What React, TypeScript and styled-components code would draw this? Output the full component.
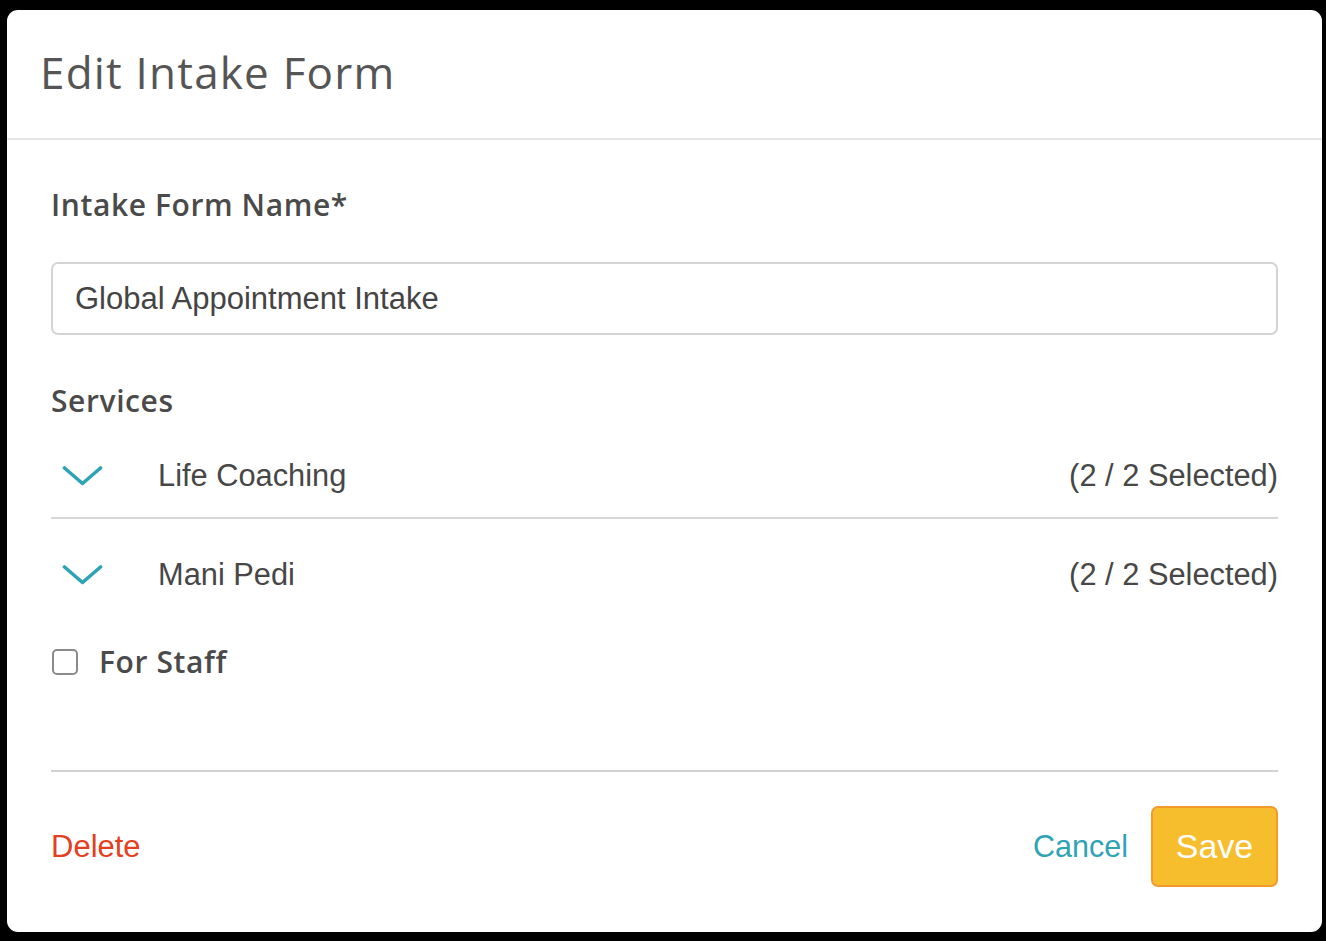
import styled, { createGlobalStyle } from 'styled-components';

const GlobalStyle = createGlobalStyle`
  html, body {
    margin: 0;
    padding: 0;
    background: #000;
  }
  * {
    box-sizing: border-box;
  }
`;

const services = [
  { name: 'Life Coaching', selected: 2, total: 2 },
  { name: 'Mani Pedi', selected: 2, total: 2 },
];

const Chevron = () => (
  <svg width="41" height="21" viewBox="0 0 41 21" fill="none">
    <polyline
      points="2.5,3 20.5,18.5 38.5,3"
      stroke="#2fa3b6"
      strokeWidth="3.6"
      strokeLinecap="round"
      strokeLinejoin="round"
    />
  </svg>
);

const App = () => {
  return (
    <>
      <GlobalStyle />
      <Page>
        <Modal>
          <Header>
            <Title>Edit Intake Form</Title>
          </Header>
          <Body>
            <Label>Intake Form Name*</Label>
            <Input defaultValue="Global Appointment Intake" />
            <Label $top={46}>Services</Label>
            <List>
              {services.map((s) => (
                <Item key={s.name}>
                  <Toggle>
                    <Chevron />
                  </Toggle>
                  <ServiceName>{s.name}</ServiceName>
                  <Count>
                    ({s.selected} / {s.total} Selected)
                  </Count>
                </Item>
              ))}
            </List>
            <CheckRow>
              <Box type="checkbox" />
              <CheckLabel>For Staff</CheckLabel>
            </CheckRow>
          </Body>
          <Footer>
            <Delete>Delete</Delete>
            <Actions>
              <Cancel>Cancel</Cancel>
              <Save>Save</Save>
            </Actions>
          </Footer>
        </Modal>
      </Page>
    </>
  );
};

const Page = styled.div`
  width: 1326px;
  height: 941px;
  padding: 10px 4px 9px 7px;
`;
const Modal = styled.div`
  width: 1315px;
  height: 922px;
  background: #fff;
  border-radius: 11px;
  display: flex;
  flex-direction: column;
  overflow: hidden;
`;
const Header = styled.header`
  height: 130px;
  display: flex;
  align-items: center;
  padding: 0 0 0 33px;
  border-bottom: 2px solid #e6e6e6;
`;
const Title = styled.h1`
  margin: 0 0 4px;
  font-family: 'Open Sans', Lato, sans-serif;
  font-weight: 400;
  font-size: 44px;
  color: #555;
  letter-spacing: 1.2px;
`;
const Body = styled.div`
  padding: 45px 44px 0;
  display: flex;
  flex-direction: column;
`;
const Label = styled.div<{ $top?: number }>`
  margin-top: ${(p) => p.$top ?? 0}px;
  font-family: 'Open Sans', Lato, sans-serif;
  font-weight: 600;
  font-size: 30px;
  line-height: 40px;
  letter-spacing: 0.6px;
  color: #4a4a4a;
`;
const Input = styled.input`
  margin-top: 37px;
  height: 73px;
  width: 100%;
  border: 2px solid #d4d4d4;
  border-radius: 7px;
  padding: 0 22px;
  font-family: 'Liberation Sans', Arial, sans-serif;
  font-size: 31px;
  color: #444;
  outline: none;
`;
const List = styled.div`
  display: flex;
  flex-direction: column;
`;
const Item = styled.div`
  display: flex;
  align-items: center;
  height: 98px;
  padding: 35px 0 22px;
  border-bottom: 2px solid #d6d6d6;
  &:last-child {
    border-bottom: none;
  }
`;
const Toggle = styled.span`
  display: flex;
  margin-left: 11px;
  width: 96px;
`;
const ServiceName = styled.span`
  flex: 1;
  font-family: 'Liberation Sans', Arial, sans-serif;
  font-size: 30.8px;
  color: #474747;
`;
const Count = styled.span`
  font-family: 'Liberation Sans', Arial, sans-serif;
  font-size: 30.8px;
  color: #474747;
`;
const CheckRow = styled.label`
  margin-top: 24px;
  display: flex;
  align-items: center;
  height: 40px;
`;
const Box = styled.input`
  appearance: none;
  margin: 2px 0 0 1px;
  width: 26px;
  height: 26px;
  border: 2px solid #8a8a8a;
  border-radius: 5px;
  background: #fff;
`;
const CheckLabel = styled.span`
  margin-left: 21px;
  font-family: 'Open Sans', Lato, sans-serif;
  font-weight: 600;
  font-size: 30px;
  letter-spacing: 0.6px;
  color: #4a4a4a;
`;
const Footer = styled.footer`
  margin: auto 44px 0;
  border-top: 2px solid #d2d2d2;
  padding: 34px 0 45px;
  display: flex;
  align-items: center;
  justify-content: space-between;
`;
const Delete = styled.button`
  border: none;
  background: none;
  padding: 0;
  font-family: 'Liberation Sans', Arial, sans-serif;
  font-size: 31px;
  color: #e4401f;
`;
const Actions = styled.div`
  display: flex;
  align-items: center;
  gap: 23px;
`;
const Cancel = styled.button`
  border: none;
  background: none;
  padding: 0;
  font-family: 'Liberation Sans', Arial, sans-serif;
  font-size: 30.5px;
  color: #2fa3b6;
`;
const Save = styled.button`
  width: 127px;
  height: 81px;
  border: 2px solid #f29a2c;
  border-radius: 7px;
  background: #f6be2c;
  color: #fff;
  font-family: 'Liberation Sans', Arial, sans-serif;
  font-size: 34px;
  padding: 0;
`;

export default App;
